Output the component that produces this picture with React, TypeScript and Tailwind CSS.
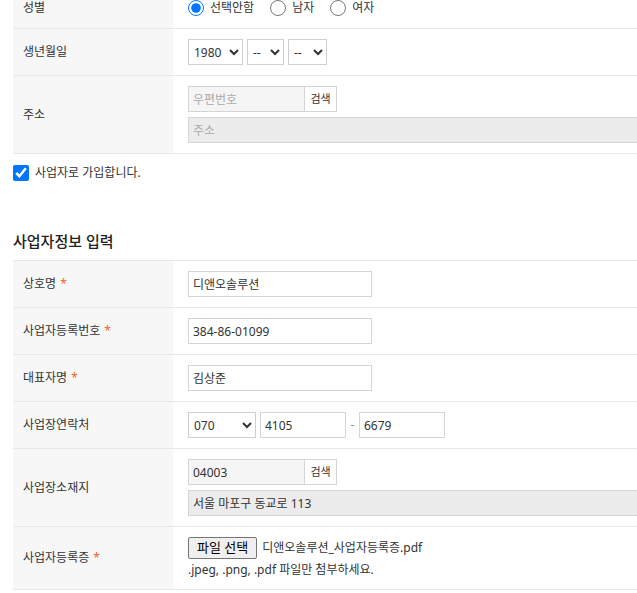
const Star = () => <span className="ml-1 text-[#f5602a]">*</span>

const Row = ({ label, req, gap, children }: { label: string; req?: boolean; gap?: string; children: React.ReactNode }) => (
  <div className="flex border-b border-[#e8e8e8]">
    <div className="w-[160px] shrink-0 bg-[#f7f7f7] pl-[10px] flex items-center">
      <span>{label}</span>
      {req && <Star />}
    </div>
    <div className={"flex-1 pl-[15px] py-[10px] flex flex-col " + (gap ?? "gap-[5px]")}>{children}</div>
  </div>
)

const inputCls = "h-[26px] border border-[#d5d5d5] px-[4px] text-[12px] text-[#333] outline-none"
const selectCls = "h-[26px] border border-[#cfcfcf] pl-[1px] text-[12px] text-[#333] bg-white"

const App = () => {
  return (
    <div
      className="w-[637px] h-[593px] overflow-hidden bg-white text-[12px] text-[#333]"
      style={{ fontFamily: '"Noto Sans", "Noto Sans CJK KR", sans-serif' }}
    >
      <div className="ml-[13px] w-[720px] -mt-[12px]">
        {/* 기본정보 */}
        <div>
          <div className="flex border-b border-[#e8e8e8] h-[41px]">
            <div className="w-[160px] shrink-0 bg-[#f7f7f7] pl-[10px] flex items-center">성별</div>
            <div className="flex-1 pl-[15px] flex items-center gap-4">
              <label className="flex items-center gap-[6px]">
                <input type="radio" name="g" defaultChecked className="w-4 h-4 m-0 accent-[#0075ff]" />
                선택안함
              </label>
              <label className="flex items-center gap-[6px]">
                <input type="radio" name="g" className="w-4 h-4 m-0" />
                남자
              </label>
              <label className="flex items-center gap-[6px]">
                <input type="radio" name="g" className="w-4 h-4 m-0" />
                여자
              </label>
            </div>
          </div>
          <Row label="생년월일">
            <div className="flex gap-1">
              <select className={selectCls + " w-[55px]"} defaultValue="1980">
                <option>1980</option>
              </select>
              <select className={selectCls + " w-[37px]"}>
                <option>--</option>
              </select>
              <select className={selectCls + " w-[39px]"}>
                <option>--</option>
              </select>
            </div>
          </Row>
          <Row label="주소">
            <div className="flex">
              <input readOnly placeholder="우편번호" className={inputCls + " w-[117px] bg-[#f5f5f5] placeholder:text-[#aaa]"} />
              <button className="h-[26px] w-[32px] border border-[#d5d5d5] border-l-0 bg-white text-[11px]">검색</button>
            </div>
            <input readOnly placeholder="주소" className={inputCls + " w-[500px] bg-[#ececec] placeholder:text-[#aaa]"} />
          </Row>
        </div>

        <label className="mt-[7px] flex items-center gap-[6px] h-[24px]">
          <input type="checkbox" defaultChecked className="w-4 h-4 m-0 accent-[#0075ff]" />
          사업자로 가입합니다.
        </label>

        <h2 className="mt-[44px] mb-[7px] h-[24px] leading-[24px] text-[15px] font-medium text-[#222]">사업자정보 입력</h2>

        {/* 사업자정보 */}
        <div className="border-t border-[#e8e8e8]">
          <Row label="상호명" req>
            <input defaultValue="디앤오솔루션" className={inputCls + " w-[184px]"} />
          </Row>
          <Row label="사업자등록번호" req>
            <input defaultValue="384-86-01099" className={inputCls + " w-[184px]"} />
          </Row>
          <Row label="대표자명" req>
            <input defaultValue="김상준" className={inputCls + " w-[184px]"} />
          </Row>
          <Row label="사업장연락처">
            <div className="flex items-center">
              <select className={selectCls + " w-[68px]"} defaultValue="070">
                <option>070</option>
              </select>
              <input defaultValue="4105" className={inputCls + " w-[86px] ml-1"} />
              <span className="w-[13px] text-center text-[#888]">-</span>
              <input defaultValue="6679" className={inputCls + " w-[86px]"} />
            </div>
          </Row>
          <Row label="사업장소재지">
            <div className="flex">
              <input readOnly defaultValue="04003" className={inputCls + " w-[117px] bg-[#f5f5f5]"} />
              <button className="h-[26px] w-[32px] border border-[#d5d5d5] border-l-0 bg-white text-[11px]">검색</button>
            </div>
            <input readOnly defaultValue="서울 마포구 동교로 113" className={inputCls + " w-[500px] bg-[#ececec]"} />
          </Row>
          <Row label="사업자등록증" req gap="gap-0">
            <div className="flex flex-col gap-[2px]">
              <div className="flex items-center gap-[5px]">
                <button className="h-[22px] px-[8px] border border-[#767676] rounded-[2px] bg-[#efefef] text-[13px] text-black">
                  파일 선택
                </button>
                <span>디앤오솔루션_사업자등록증.pdf</span>
              </div>
              <p className="leading-[18px]">.jpeg, .png, .pdf 파일만 첨부하세요.</p>
            </div>
          </Row>
        </div>
      </div>
    </div>
  )
}

export default App
